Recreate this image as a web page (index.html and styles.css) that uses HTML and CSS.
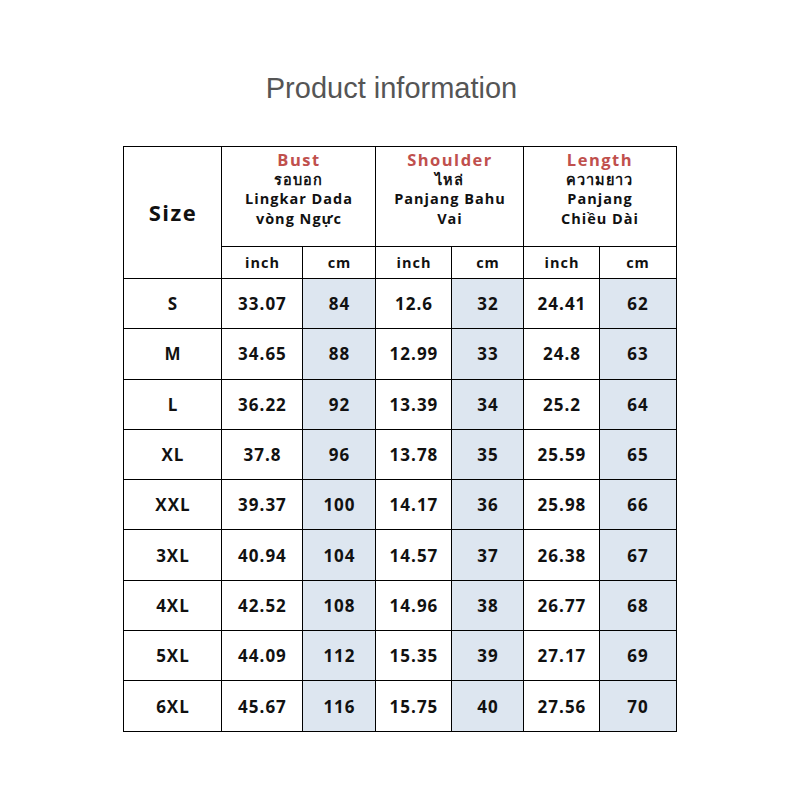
FILE: index.html
```html
<!DOCTYPE html>
<html lang="en">
<head>
    <meta charset="UTF-8">
    <meta name="viewport" content="width=device-width, initial-scale=1.0">
    <title>Product information</title>
    <link rel="stylesheet" href="styles.css">
</head>
<body>

<div class="page">
    <h1 class="title">Product information</h1>

    <table class="size-table">
        <colgroup>
            <col class="c-size">
            <col class="c-a"><col class="c-b">
            <col class="c-c"><col class="c-d">
            <col class="c-e"><col class="c-f">
        </colgroup>
        <thead>
            <tr class="head-top">
                <th rowspan="2" class="size-head">Size</th>
                <th colspan="2">
                    <span class="red">Bust</span>
                    <span>รอบอก</span>
                    <span>Lingkar Dada</span>
                    <span>vòng Ngực</span>
                </th>
                <th colspan="2">
                    <span class="red">Shoulder</span>
                    <span>ไหล่</span>
                    <span>Panjang Bahu</span>
                    <span>Vai</span>
                </th>
                <th colspan="2">
                    <span class="red">Length</span>
                    <span>ความยาว</span>
                    <span>Panjang</span>
                    <span>Chiều Dài</span>
                </th>
            </tr>
            <tr class="head-unit">
                <th>inch</th><th>cm</th>
                <th>inch</th><th>cm</th>
                <th>inch</th><th>cm</th>
            </tr>
        </thead>
        <tbody>
            <tr><td>S</td><td>33.07</td><td class="cm">84</td><td>12.6</td><td class="cm">32</td><td>24.41</td><td class="cm">62</td></tr>
            <tr><td>M</td><td>34.65</td><td class="cm">88</td><td>12.99</td><td class="cm">33</td><td>24.8</td><td class="cm">63</td></tr>
            <tr><td>L</td><td>36.22</td><td class="cm">92</td><td>13.39</td><td class="cm">34</td><td>25.2</td><td class="cm">64</td></tr>
            <tr><td>XL</td><td>37.8</td><td class="cm">96</td><td>13.78</td><td class="cm">35</td><td>25.59</td><td class="cm">65</td></tr>
            <tr><td>XXL</td><td>39.37</td><td class="cm">100</td><td>14.17</td><td class="cm">36</td><td>25.98</td><td class="cm">66</td></tr>
            <tr><td>3XL</td><td>40.94</td><td class="cm">104</td><td>14.57</td><td class="cm">37</td><td>26.38</td><td class="cm">67</td></tr>
            <tr><td>4XL</td><td>42.52</td><td class="cm">108</td><td>14.96</td><td class="cm">38</td><td>26.77</td><td class="cm">68</td></tr>
            <tr><td>5XL</td><td>44.09</td><td class="cm">112</td><td>15.35</td><td class="cm">39</td><td>27.17</td><td class="cm">69</td></tr>
            <tr><td>6XL</td><td>45.67</td><td class="cm">116</td><td>15.75</td><td class="cm">40</td><td>27.56</td><td class="cm">70</td></tr>
        </tbody>
    </table>
</div>

</body>
</html>
```

FILE: styles.css
```css
body {
    margin: 0;
    background: #fff;
    font-family: "Open Sans", "Noto Sans", "DejaVu Sans", sans-serif;
    color: #111;
}

.page {
    width: 800px;
    height: 800px;
    display: flex;
    flex-direction: column;
    align-items: center;
}

.title {
    margin: 72px 0 0 -17px;
    height: 74px;
    font-family: "Liberation Sans", Arial, sans-serif;
    font-weight: normal;
    font-size: 29px;
    color: #555;
}

.size-table {
    border-collapse: collapse;
    table-layout: fixed;
    width: 553px;
    border: 1.5px solid #000;
}

.c-size { width: 98px; }
.c-a { width: 81px; }
.c-b { width: 73px; }
.c-c { width: 76px; }
.c-d { width: 72px; }
.c-e { width: 76px; }
.c-f { width: 76px; }

.size-table th,
.size-table td {
    border: 1.5px solid #000;
    text-align: center;
    padding: 0;
    font-weight: bold;
}

.head-top {
    height: 100px;
}

.head-top th {
    vertical-align: top;
    padding-top: 3px;
    font-size: 14.5px;
    line-height: 19.5px;
    letter-spacing: 1px;
}

.head-top th span {
    display: block;
}

.head-top th.size-head {
    vertical-align: middle;
    padding-top: 0;
    font-size: 22px;
    letter-spacing: 1.5px;
}

.red {
    color: #c0504d;
    font-size: 16.5px;
    letter-spacing: 1.5px;
}

.head-unit {
    height: 32px;
}

.head-unit th {
    font-size: 14.5px;
    letter-spacing: 1px;
}

.size-table tbody tr {
    height: 50.3px;
}

.size-table td {
    font-size: 17px;
    letter-spacing: 1px;
}

.size-table td.cm {
    background: #dde6f0;
}
```
